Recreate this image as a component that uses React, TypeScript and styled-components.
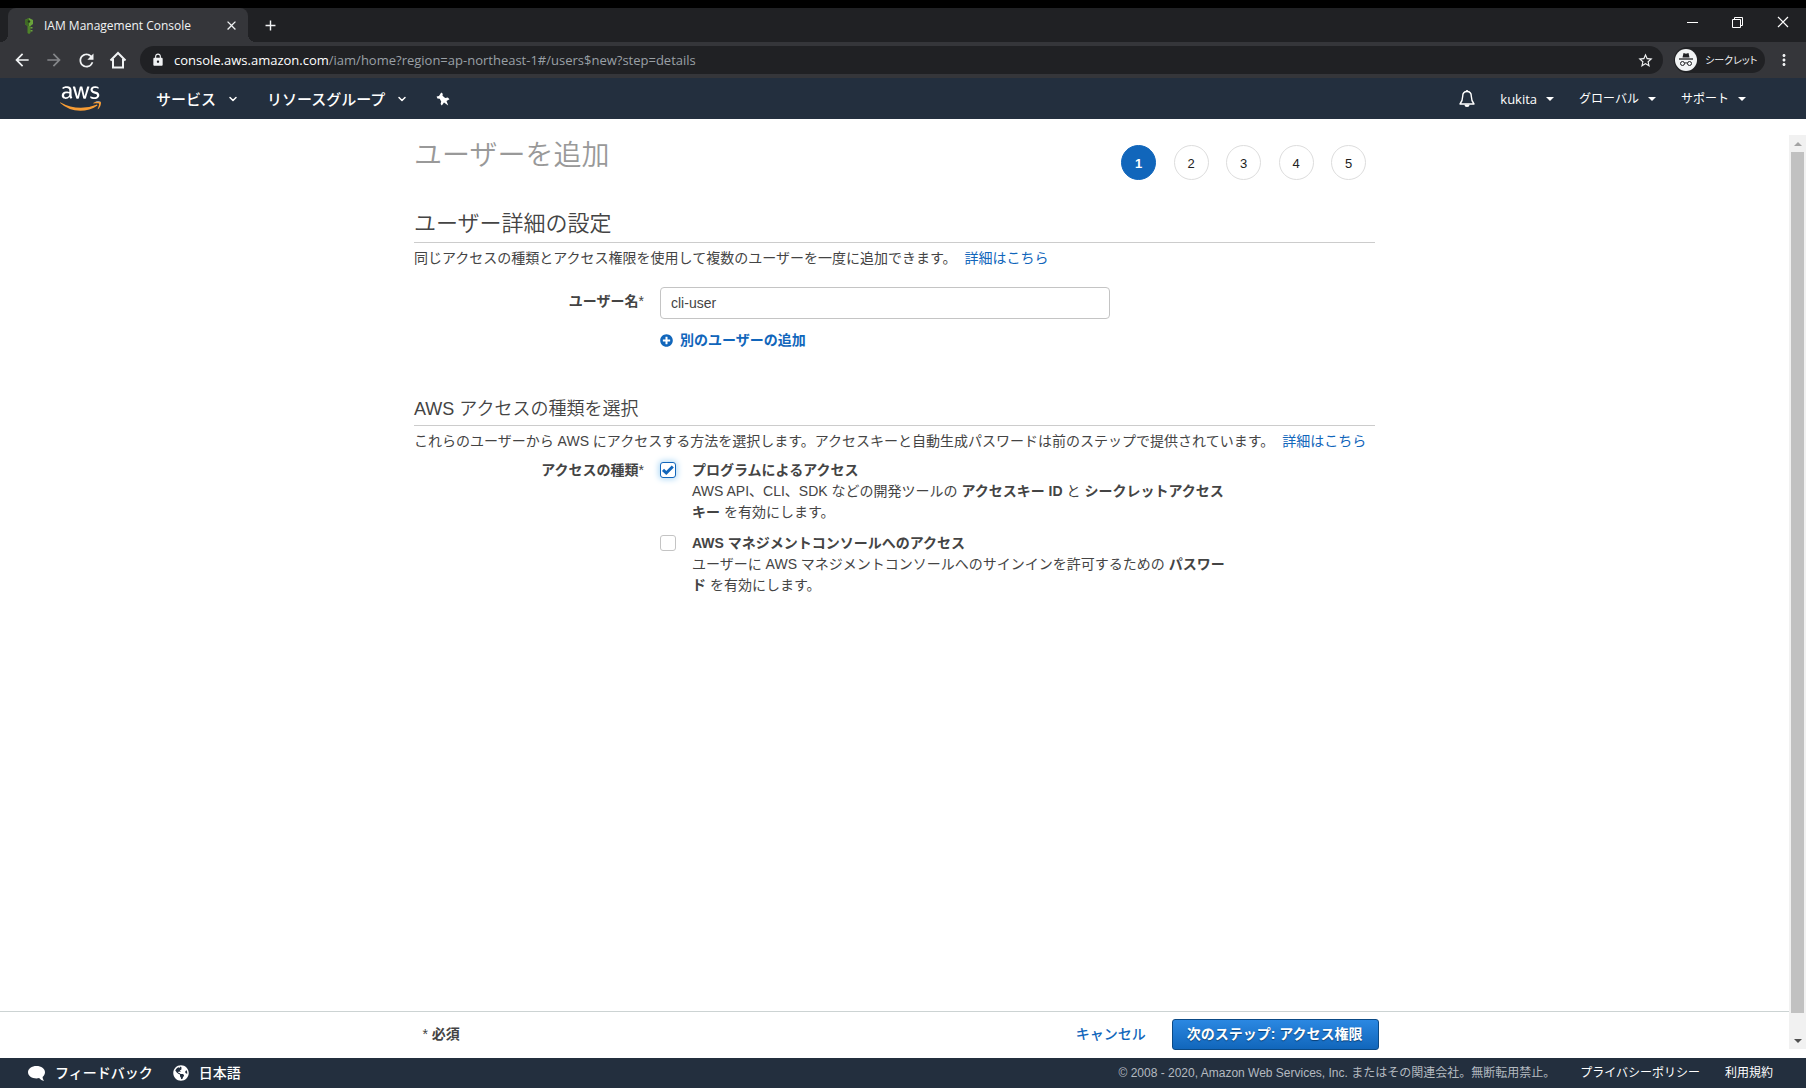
import React, { useState } from 'react';
import styled, { createGlobalStyle, css } from 'styled-components';
import {
  MdArrowBack,
  MdArrowForward,
  MdRefresh,
  MdLock,
  MdStarBorder,
  MdMoreVert,
  MdClose,
  MdAdd,
} from 'react-icons/md';
import { FaAws, FaPlusCircle, FaGlobeAmericas } from 'react-icons/fa';
import { ChevronDown } from 'lucide-react';

const sans = '"Liberation Sans", "Noto Sans CJK JP", sans-serif';
const uiSans = '"Open Sans", "Noto Sans CJK JP", sans-serif';
const link = '#1166bb';
const navy = '#232f3e';

const GlobalStyle = createGlobalStyle`
  *, *::before, *::after { box-sizing: border-box; }
  body { margin: 0; background: #fff; color: #444; font: 14px/21px ${sans}; }
  h1, h2, h3, p { margin: 0; }
  h1, h2, h3 { font-weight: 350; }
  button { font: inherit; color: inherit; background: none; border: 0; padding: 0; cursor: pointer; }
  a { color: ${link}; text-decoration: none; }
  svg { display: block; flex: none; }
`;

const Page = styled.div`
  display: flex;
  flex-direction: column;
  min-height: 100vh;
  border-top: 8px solid #000;
`;

/* ---------- Browser window ---------- */

const TabStrip = styled.div`
  display: flex;
  height: 34px;
  padding-left: 8px;
  background: #202124;
  color: #f1f3f4;
  font: 12px/28px ${uiSans};
`;

const Tab = styled.div`
  position: relative;
  display: flex;
  align-items: center;
  width: 240px;
  padding: 1px 9px 0 14px;
  gap: 8px;
  border-radius: 8px 8px 0 0;
  background: #35363a;

  &::before,
  &::after {
    content: '';
    position: absolute;
    bottom: 0;
    width: 8px;
    height: 8px;
  }
  &::before {
    left: -8px;
    background: radial-gradient(circle at 0 0, transparent 8px, #35363a 8px);
  }
  &::after {
    right: -8px;
    background: radial-gradient(circle at 100% 0, transparent 8px, #35363a 8px);
  }
`;

const TabTitle = styled.span`
  flex: 1;
  white-space: nowrap;
`;

const NewTab = styled.button`
  margin-left: 14px;
`;

const WindowControls = styled.div`
  display: flex;
  align-items: center;
  gap: 34px;
  margin-left: auto;
  padding: 0 17px 6px 0;
`;

const Toolbar = styled.div`
  display: flex;
  align-items: center;
  height: 36px;
  padding: 0 13px 0 12px;
  background: #35363a;
  color: #f1f3f4;
  font: 12px/26px ${uiSans};
`;

const ToolButton = styled.button<{ $dim?: boolean }>`
  display: flex;
  justify-content: center;
  width: 20px;
  margin-right: 12px;
  color: ${(p) => (p.$dim ? '#85878a' : '#f1f3f4')};
`;

const Omnibox = styled.div`
  display: flex;
  flex: 1;
  align-items: center;
  height: 28px;
  padding: 0 9px 0 11px;
  border-radius: 14px;
  background: #202124;
  font-size: 13px;
`;

const Url = styled.span`
  flex: 1;
  margin-left: 9px;
  color: #9aa0a6;
  white-space: nowrap;

  b {
    font-weight: 400;
    color: #fff;
  }
`;

const Incognito = styled.div`
  display: flex;
  align-items: center;
  gap: 8px;
  width: 91px;
  height: 26px;
  margin: 0 10px 0 11px;
  padding-left: 1px;
  border-radius: 13px;
  background: #202124;
  font-size: 10px;
  font-feature-settings: 'palt';
  white-space: nowrap;
`;

/* ---------- Console navigation ---------- */

const Nav = styled.nav`
  display: flex;
  align-items: center;
  height: 41px;
  padding: 0 60px;
  background: ${navy};
  color: #fff;
  font: 12px/20px ${uiSans};
`;

const NavMenu = styled.button<{ $primary?: boolean; $latin?: boolean }>`
  display: flex;
  align-items: center;
  gap: 9px;
  font-size: ${(p) => (p.$latin ? 13 : 12)}px;
  white-space: nowrap;
  ${(p) =>
    p.$primary &&
    css`
      gap: 11px;
      margin-right: 28px;
      font-size: 15px;
      font-weight: 500;
    `}
`;

const NavLeft = styled.div`
  display: flex;
  align-items: center;
  margin-left: 55px;
`;

const NavRight = styled.div`
  display: flex;
  align-items: center;
  gap: 25px;
  margin-left: auto;
`;

/* ---------- Workspace ---------- */

const Workspace = styled.div`
  display: flex;
  flex: 1;
`;

const Column = styled.div`
  display: flex;
  flex: 1;
  flex-direction: column;
`;

const Content = styled.main`
  flex: 1;
  width: 100%;
  max-width: 961px;
  margin: 0 auto;
  padding-top: 22px;
`;

const Heading = styled.header`
  display: flex;
  justify-content: space-between;
`;

const Title = styled.h1`
  color: #999;
  font-size: 28px;
  line-height: 30px;
`;

const Steps = styled.ol`
  display: flex;
  justify-content: space-between;
  width: 245px;
  margin: 4px 9px 0 0;
  padding: 0;
  list-style: none;
`;

const Step = styled.li<{ $active?: boolean }>`
  width: 35px;
  height: 35px;
  border: 1px solid ${(p) => (p.$active ? link : '#ddd')};
  border-radius: 50%;
  background: ${(p) => (p.$active ? link : '#fff')};
  color: ${(p) => (p.$active ? '#fff' : '#222')};
  font-size: 13px;
  font-weight: ${(p) => (p.$active ? 700 : 400)};
  line-height: 35px;
  text-align: center;
`;

const SectionTitle = styled.h2`
  margin-top: 28px;
  padding-bottom: 2px;
  border-bottom: 1px solid #ccc;
  font-size: 22px;
  line-height: 32px;
`;

const SubTitle = styled.h3`
  margin-top: 46px;
  padding-bottom: 4px;
  border-bottom: 1px solid #ccc;
  font-size: 18px;
  line-height: 24px;
`;

const Lead = styled.p`
  margin-top: 5px;

  a {
    margin-left: 4px;
  }
`;

const FormRow = styled.div<{ $gap: number }>`
  display: grid;
  grid-template-columns: 230px minmax(0, 1fr);
  column-gap: 16px;
  margin-top: ${(p) => p.$gap}px;
`;

const fieldLabel = css`
  font-weight: 700;
  text-align: right;

  span {
    font-weight: 400;
  }
`;

const FieldLabel = styled.label`
  ${fieldLabel}
  line-height: 28px;
`;

const GroupLabel = styled.div`
  ${fieldLabel}
`;

const Field = styled.div`
  display: flex;
  flex-direction: column;
  align-items: flex-start;
  gap: 11px;
`;

const TextInput = styled.input`
  width: 100%;
  max-width: 450px;
  height: 32px;
  padding: 0 10px;
  border: 1px solid #c4c4c4;
  border-radius: 4px;
  outline: 0;
  color: #444;
  font: 14px/20px ${sans};
`;

const AddUser = styled.button`
  display: flex;
  align-items: center;
  gap: 7px;
  color: ${link};
  font-weight: 700;
`;

const Options = styled.div`
  display: grid;
  gap: 10px;
`;

const Option = styled.div`
  display: flex;
  gap: 16px;
`;

const CheckBox = styled.span`
  position: relative;
  width: 16px;
  height: 16px;
  margin-top: 2px;

  svg {
    position: absolute;
    inset: 0;
    pointer-events: none;
  }
`;

const CheckInput = styled.input`
  display: block;
  width: 16px;
  height: 16px;
  margin: 0;
  border: 1px solid #c4c4c4;
  border-radius: 3px;
  background: #fff;
  appearance: none;

  &:checked {
    border-color: ${link};
    box-shadow: 0 0 6px 1px #a9d6f5;
  }
`;

const OptionText = styled.div`
  max-width: 540px;

  label {
    display: block;
    font-weight: 700;
  }
`;

const ActionBar = styled.div`
  height: 47px;
  border-top: 1px solid #ccd3d3;
`;

const ActionInner = styled.div`
  display: flex;
  align-items: center;
  max-width: 968px;
  height: 45px;
  margin: 0 auto;
  padding-left: 12px;
`;

const Required = styled.span`
  margin-right: auto;
  font-weight: 700;

  span {
    font-weight: 400;
  }
`;

const Cancel = styled.button`
  margin-right: 26px;
  color: ${link};
  font-weight: 500;
`;

const Next = styled.button`
  height: 31px;
  padding: 0 15px 0 14px;
  border: 1px solid #0b4a86;
  border-radius: 3px;
  background: linear-gradient(#2b88e2, #1166bb);
  color: #fff;
  font-weight: 700;
  text-shadow: 0 1px 1px #0b3f75;
`;

const ScrollTrack = styled.div`
  display: flex;
  flex-direction: column;
  align-items: center;
  width: 17px;
  margin: 16px 0 9px;
  background: #f1f1f1;
`;

const ScrollArrow = styled.div<{ $down?: boolean }>`
  display: flex;
  align-items: center;
  height: 17px;
  margin-top: ${(p) => (p.$down ? 19 : 0)}px;
  color: ${(p) => (p.$down ? '#505050' : '#a3a3a3')};
`;

const ScrollThumb = styled.div`
  flex: 1;
  width: 13px;
  background: #c1c1c1;
`;

/* ---------- Console footer ---------- */

const Footer = styled.footer`
  display: flex;
  align-items: center;
  height: 30px;
  padding: 0 33px 0 28px;
  background: ${navy};
  color: #fff;
  font-size: 12px;
  line-height: 20px;

  a {
    margin-left: 25px;
    color: #fff;
  }
`;

const FooterButton = styled.button`
  display: flex;
  align-items: center;
  gap: 10px;
  margin-right: 20px;
  font-size: 14px;
  font-weight: 500;
`;

const Copyright = styled.span`
  margin-left: auto;
  color: #b4bac0;
`;

/* ---------- Drawings ---------- */

const KeyIcon = () => (
  <svg width="14" height="16" viewBox="0 0 14 16">
    <path d="M7 0l4 2v4L8.500 8H5.500L3 6V2z" fill="#6aa33b" />
    <path d="M7 0L3 2v4l2.500 2L7 8z" fill="#3f6b24" />
    <circle cx="7" cy="3.500" r="1.200" fill="#26331d" />
    <path d="M5.500 8h3v7L7 16l-1.500-1z" fill="#4f8429" />
    <path d="M8.500 9h2v1.500h-2zM8.500 12h2v1.500h-2z" fill="#6aa33b" />
  </svg>
);

const HomeIcon = () => (
  <svg width="18" height="18" viewBox="0 0 18 18" fill="none" stroke="currentColor" strokeWidth="2">
    <path d="M1.500 9.500L9 2l7.500 7.500M4 8v8.500h10V8" />
  </svg>
);

const MinimizeIcon = () => (
  <svg width="11" height="11" viewBox="0 0 11 11" stroke="#fff">
    <path d="M0 5.500h11" />
  </svg>
);

const RestoreIcon = () => (
  <svg width="11" height="11" viewBox="0 0 11 11" fill="none" stroke="#fff">
    <path d="M.5 2.500h8v8h-8zM2.500 2.500v-2h8v8h-2" />
  </svg>
);

const CloseIcon = () => (
  <svg width="12" height="12" viewBox="0 0 12 12" stroke="#fff" strokeWidth="1.200">
    <path d="M1 1l10 10M11 1L1 11" />
  </svg>
);

const IncognitoIcon = () => (
  <svg width="22" height="22" viewBox="0 0 22 22">
    <circle cx="11" cy="11" r="11" fill="#f1f3f4" />
    <path d="M7.500 8.500l1-4.500 2.500.8L13.500 4l1 4.500z" fill="#202124" />
    <path d="M4 10h14" stroke="#202124" strokeWidth="1.300" />
    <g fill="none" stroke="#202124" strokeWidth="1">
      <circle cx="7.500" cy="14.500" r="2" />
      <circle cx="14.500" cy="14.500" r="2" />
      <path d="M9.500 14.200q1.500-.8 3 0" />
    </g>
  </svg>
);

const PinIcon = () => (
  <svg width="14" height="14" viewBox="0 0 14 14" fill="#fff">
    <path d="M5.200.4l1.600 1.400-.3 2 2.700 2.100 2.600-.3 1.700 1.600-3 1.900 1.700 4.500-4.200-3-2.200 2.800-1.200-1.500.6-2.500-1.500-2.600-2.300-.4L.6 4.600l2.400-.7z" />
  </svg>
);

const BellIcon = () => (
  <svg width="16" height="18" viewBox="0 0 16 18">
    <path
      d="M8 1.500c-3 0-4.300 2.200-4.300 4.800 0 4-1 5.600-2.700 7.700h14c-1.700-2.100-2.700-3.700-2.700-7.700 0-2.600-1.300-4.800-4.300-4.800z"
      fill="none"
      stroke="#fff"
      strokeWidth="1.400"
      strokeLinejoin="round"
    />
    <path d="M5.500 14.500a2.500 2.500 0 0 0 5 0zM7.200 0h1.600v2H7.200z" fill="#fff" />
  </svg>
);

const BubbleIcon = () => (
  <svg width="17" height="17" viewBox="0 0 17 17" fill="#fff">
    <path d="M8.500 1C3.800 1 0 3.700 0 7.200s3.800 6.200 8.500 6.200c.9 0 1.800-.1 2.600-.3 1.300 1.500 2.900 2.600 5.100 2.900-.9-1.100-1.500-2.500-1.600-4.100C16.100 10.700 17 9.100 17 7.200 17 3.700 13.200 1 8.500 1z" />
  </svg>
);

const TickIcon = () => (
  <svg width="16" height="16" viewBox="0 0 16 16" fill="none" stroke="#1166bb" strokeWidth="3">
    <path d="M3 7.800l3.300 3.200L12.800 4.500" />
  </svg>
);

const ArrowShape = ({ down }: { down?: boolean }) => (
  <svg width="8" height="4" viewBox="0 0 8 4" fill="currentColor">
    <path d={down ? 'M0 0h8L4 4z' : 'M0 4h8L4 0z'} />
  </svg>
);

const AwsLogo = () => (
  <>
    <svg width="0" height="0" viewBox="0 0 1 1">
      <linearGradient id="aws-colors" x1="0" y1="0" x2="0" y2="1">
        <stop offset="0.63" stopColor="#fff" />
        <stop offset="0.63" stopColor="#f79c34" />
      </linearGradient>
    </svg>
    <FaAws size={41} fill="url(#aws-colors)" aria-label="AWS" />
  </>
);

const accountMenus = [
  { label: 'kukita', latin: true },
  { label: 'グローバル', latin: false },
  { label: 'サポート', latin: false },
];

export default function App() {
  const [name, setName] = useState('cli-user');
  const [api, setApi] = useState(true);
  const [consoleAccess, setConsoleAccess] = useState(false);

  return (
    <Page>
      <GlobalStyle />
      <TabStrip>
        <Tab>
          <KeyIcon />
          <TabTitle>IAM Management Console</TabTitle>
          <button aria-label="閉じる">
            <MdClose size={15} />
          </button>
        </Tab>
        <NewTab aria-label="新しいタブ">
          <MdAdd size={17} />
        </NewTab>
        <WindowControls>
          <button aria-label="最小化">
            <MinimizeIcon />
          </button>
          <button aria-label="元に戻す">
            <RestoreIcon />
          </button>
          <button aria-label="ウィンドウを閉じる">
            <CloseIcon />
          </button>
        </WindowControls>
      </TabStrip>

      <Toolbar>
        <ToolButton aria-label="戻る">
          <MdArrowBack size={20} />
        </ToolButton>
        <ToolButton aria-label="進む" $dim>
          <MdArrowForward size={20} />
        </ToolButton>
        <ToolButton aria-label="再読み込み">
          <MdRefresh size={21} />
        </ToolButton>
        <ToolButton aria-label="ホーム">
          <HomeIcon />
        </ToolButton>
        <Omnibox>
          <MdLock size={14} />
          <Url>
            <b>console.aws.amazon.com</b>/iam/home?region=ap-northeast-1#/users$new?step=details
          </Url>
          <MdStarBorder size={17} />
        </Omnibox>
        <Incognito>
          <IncognitoIcon />
          シークレット
        </Incognito>
        <button aria-label="メニュー">
          <MdMoreVert size={18} />
        </button>
      </Toolbar>

      <Nav>
        <AwsLogo />
        <NavLeft>
          <NavMenu $primary>
            サービス
            <ChevronDown size={12} strokeWidth={3} />
          </NavMenu>
          <NavMenu $primary>
            リソースグループ
            <ChevronDown size={12} strokeWidth={3} />
          </NavMenu>
          <button aria-label="ピン留め">
            <PinIcon />
          </button>
        </NavLeft>
        <NavRight>
          <button aria-label="通知">
            <BellIcon />
          </button>
          {accountMenus.map(({ label, latin }) => (
            <NavMenu key={label} $latin={latin}>
              {label}
              <ArrowShape down />
            </NavMenu>
          ))}
        </NavRight>
      </Nav>

      <Workspace>
        <Column>
          <Content>
            <Heading>
              <Title>ユーザーを追加</Title>
              <Steps>
                {[1, 2, 3, 4, 5].map((n) => (
                  <Step key={n} $active={n === 1}>
                    {n}
                  </Step>
                ))}
              </Steps>
            </Heading>

            <SectionTitle>ユーザー詳細の設定</SectionTitle>
            <Lead>
              同じアクセスの種類とアクセス権限を使用して複数のユーザーを一度に追加できます。 <a href="#users">詳細はこちら</a>
            </Lead>
            <FormRow $gap={18}>
              <FieldLabel htmlFor="user-name">
                ユーザー名<span>*</span>
              </FieldLabel>
              <Field>
                <TextInput id="user-name" value={name} onChange={(e) => setName(e.target.value)} />
                <AddUser>
                  <FaPlusCircle size={13} />
                  別のユーザーの追加
                </AddUser>
              </Field>
            </FormRow>

            <SubTitle>AWS アクセスの種類を選択</SubTitle>
            <Lead>
              これらのユーザーから AWS にアクセスする方法を選択します。アクセスキーと自動生成パスワードは前のステップで提供されています。{' '}
              <a href="#access">詳細はこちら</a>
            </Lead>
            <FormRow $gap={8}>
              <GroupLabel id="access-type">
                アクセスの種類<span>*</span>
              </GroupLabel>
              <Options role="group" aria-labelledby="access-type">
                <Option>
                  <CheckBox>
                    <CheckInput
                      id="api-access"
                      type="checkbox"
                      checked={api}
                      onChange={(e) => setApi(e.target.checked)}
                    />
                    {api && <TickIcon />}
                  </CheckBox>
                  <OptionText>
                    <label htmlFor="api-access">プログラムによるアクセス</label>
                    AWS API、CLI、SDK などの開発ツールの <b>アクセスキー ID</b> と <b>シークレットアクセスキー</b>{' '}
                    を有効にします。
                  </OptionText>
                </Option>
                <Option>
                  <CheckBox>
                    <CheckInput
                      id="console-access"
                      type="checkbox"
                      checked={consoleAccess}
                      onChange={(e) => setConsoleAccess(e.target.checked)}
                    />
                    {consoleAccess && <TickIcon />}
                  </CheckBox>
                  <OptionText>
                    <label htmlFor="console-access">AWS マネジメントコンソールへのアクセス</label>
                    ユーザーに AWS マネジメントコンソールへのサインインを許可するための <b>パスワード</b>{' '}
                    を有効にします。
                  </OptionText>
                </Option>
              </Options>
            </FormRow>
          </Content>

          <ActionBar>
            <ActionInner>
              <Required>
                <span>*</span> 必須
              </Required>
              <Cancel>キャンセル</Cancel>
              <Next>次のステップ: アクセス権限</Next>
            </ActionInner>
          </ActionBar>
        </Column>
        <ScrollTrack>
          <ScrollArrow>
            <ArrowShape />
          </ScrollArrow>
          <ScrollThumb />
          <ScrollArrow $down>
            <ArrowShape down />
          </ScrollArrow>
        </ScrollTrack>
      </Workspace>

      <Footer>
        <FooterButton>
          <BubbleIcon />
          フィードバック
        </FooterButton>
        <FooterButton>
          <FaGlobeAmericas size={16} />
          日本語
        </FooterButton>
        <Copyright>© 2008 - 2020, Amazon Web Services, Inc. またはその関連会社。無断転用禁止。</Copyright>
        <a href="#privacy">プライバシーポリシー</a>
        <a href="#terms">利用規約</a>
      </Footer>
    </Page>
  );
}
